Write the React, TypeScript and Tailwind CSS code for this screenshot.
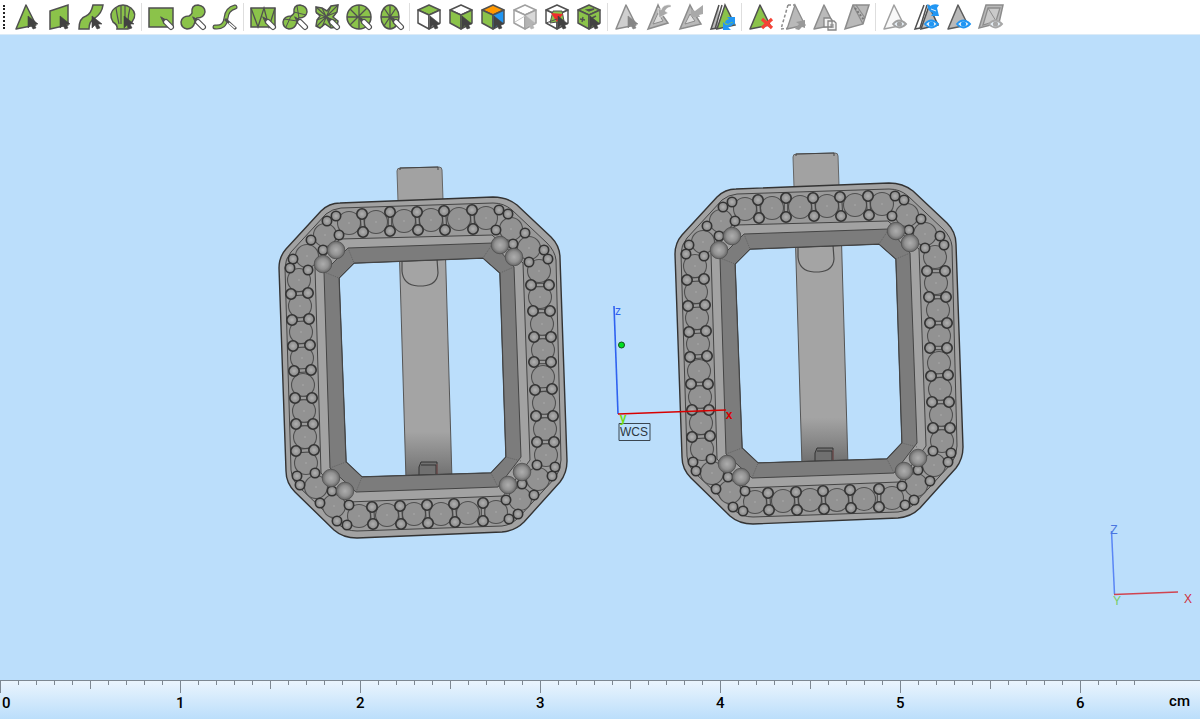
import React from 'react';

const GREEN = '#8bc34a';
const DARK = '#505050';
const GRAY = '#b9b9b9';
const GRAY_LINE = '#8c8c8c';
const BLUE = '#2196f3';

function Cursor({ color = '#424242' }: { color?: string }) {
  return <path d="M14 12v12l3-3 2 4 3-1-2-4h4z" fill={color} stroke={color} strokeWidth={0.6} strokeLinejoin="round" />;
}

function Stylus() {
  return (
    <g strokeLinecap="round">
      <path d="M13 13l5 3-2 3z" fill={DARK} stroke={DARK} />
      <path d="M18 18l5 5" stroke={DARK} strokeWidth={6} />
      <path d="M18 18l5 5" stroke="#fff" strokeWidth={3.8} />
    </g>
  );
}

function Eye({ color = BLUE }: { color?: string }) {
  return (
    <g>
      <path d="M11 20q6-7 13 0q-7 7-13 0z" fill="#e8f1f8" stroke={color} strokeWidth={1.8} />
      <circle cx={17.5} cy={20} r={2.6} fill={color} />
    </g>
  );
}

function Refresh() {
  return (
    <g fill={BLUE}>
      <path d="M17 13h8v8l-3-3-4 2-3-1q0-3 4-4z" />
      <path d="M13 18v8h8l-3-3q5-1 6-4h-3q-2 2-5 2z" />
    </g>
  );
}

function Cube({ top = '#fff', left = '#fff', right = '#fff', line = DARK }: { top?: string; left?: string; right?: string; line?: string }) {
  return (
    <g stroke={line} strokeWidth={1.5} strokeLinejoin="round">
      <path d="M13 1l11 5-11 5L2 6z" fill={top} />
      <path d="M2 6l11 5v14L2 19z" fill={left} />
      <path d="M24 6l-11 5v14l11-6z" fill={right} />
    </g>
  );
}

function Triangle({ fill = GREEN, line = DARK }: { fill?: string; line?: string }) {
  return <path d="M12 1L2 25l20-4z" fill={fill} stroke={line} strokeWidth={1.5} strokeLinejoin="round" />;
}

const blob = 'M12 9Q11 1 18 1Q25 2 25 8Q24 14 17 14Q15 15 15 18Q13 25 7 25Q1 24 1 18Q2 12 9 12Q11 11 12 9z';

const toolGroups: { label: string; icon: React.ReactNode }[][] = [
  [
    { label: 'Select face', icon: <><Triangle /><Cursor /></> },
    { label: 'Select plane', icon: <><path d="M4 7l18-6v20L4 25z" fill={GREEN} stroke={DARK} strokeWidth={1.5} /><Cursor /></> },
    { label: 'Select smooth region', icon: <><path d="M1 25Q1 14 8 12Q13 10 15 1H25Q24 9 17 14Q11 17 11 25z" fill={GREEN} stroke={DARK} strokeWidth={1.5} /><Cursor /></> },
    { label: 'Select shell', icon: <><path d="M7 25Q8 21 3 18Q-2 9 5 4Q13-2 21 4Q28 10 22 18Q18 21 18 25z" fill={GREEN} stroke={DARK} strokeWidth={1.5} /><path d="M6 4Q7 11 9 20M11 2v18M15 2v18M20 4Q18 11 18 18" stroke={DARK} strokeWidth={1.2} /><Cursor /></> },
  ],
  [
    { label: 'Rectangle selection', icon: <><path d="M1 4h24v19H1z" fill={GREEN} stroke={DARK} strokeWidth={1.5} /><Stylus /></> },
    { label: 'Freeform selection', icon: <><path d={blob} fill={GREEN} stroke={DARK} strokeWidth={1.5} /><Stylus /></> },
    { label: 'Brush selection', icon: <><g strokeLinecap="round"><path d="M3 23Q13 24 14 14Q15 5 23 3" stroke={DARK} strokeWidth={5} /><path d="M3 23Q13 24 14 14Q15 5 23 3" stroke={GREEN} strokeWidth={2.6} /></g><path d="M13 15l11 10" stroke={DARK} strokeWidth={3} /><path d="M17 19l6 5" stroke="#fff" strokeWidth={1.5} /></> },
  ],
  [
    { label: 'Rectangle through', icon: <><path d="M1 4h24v19H1z" fill={GREEN} stroke={DARK} strokeWidth={1.5} /><path d="M1 4l7 19 6-19 5 19 6-19" stroke={DARK} strokeWidth={1.3} /><Stylus /></> },
    { label: 'Freeform through', icon: <><path d={blob} fill={GREEN} stroke={DARK} strokeWidth={1.5} /><path d="M12 8l12 3M15 2l2 12M2 15l13 2M4 23l5-11" stroke={DARK} /><Stylus /></> },
    { label: 'Star selection', icon: <><path d="M2 3l6 1 5 3 4-5 7-1-1 7-4 5 5 4-1 6-6 1-6-4-5 4-4-2 1-6 3-4-4-4z" fill={GREEN} stroke={DARK} strokeWidth={1.5} /><path d="M2 3l21 19M24 1L3 22M8 4l9 19M17 2L8 23M2 9l20 8M23 8L3 16" stroke={DARK} strokeWidth={1.1} /><Stylus /></> },
    { label: 'Circle selection', icon: <><circle cx={13} cy={13} r={12} fill={GREEN} stroke={DARK} strokeWidth={1.5} /><path d="M13 1v24M1 13h24M4 5l17 17M21 4L4 21" stroke={DARK} strokeWidth={1.3} /><Stylus /></> },
    { label: 'Ellipse selection', icon: <><ellipse cx={12} cy={13} rx={9} ry={12} fill={GREEN} stroke={DARK} strokeWidth={1.5} /><path d="M12 1v24M3 13h18M6 4l12 18M18 4L6 22" stroke={DARK} strokeWidth={1.3} /><Stylus /></> },
  ],
  [
    { label: 'Top faces', icon: <><Cube top={GREEN} /><Cursor /></> },
    { label: 'Side faces', icon: <><Cube left={GREEN} right={GREEN} /><Cursor /></> },
    { label: 'Faces by colour', icon: <><Cube top="#ff9800" left={GREEN} right={BLUE} /><Cursor /></> },
    { label: 'Hidden faces', icon: <><Cube right="#d8d8d8" line="#a0a0a0" /><path d="M3 18l10-6" stroke="#c8c8c8" /><Cursor color="#b4b4b4" /></> },
    { label: 'Inner faces', icon: <><Cube /><path d="M6 19l3-12h9l2 10z" fill={GREEN} stroke={DARK} /><path d="M7 9l12 1-6 8z" fill="#f02c2c" /><path d="M2 19l11-4M13 18v7" stroke={DARK} /><Cursor /></> },
    { label: 'Textured faces', icon: <><Cube top={GREEN} left={GREEN} right={GREEN} /><path d="M11 6l7-1-5 2zM4 15l5 1M7 13l-1 5M16 14l4-2" fill={DARK} stroke={DARK} strokeWidth={1.4} /><Cursor /></> },
  ],
  [
    { label: 'Pick', icon: <><Triangle fill="#cfcfcf" line={GRAY_LINE} /><Cursor color="#858585" /></> },
    { label: 'Shrink selection', icon: <><path d="M12 1L2 25l20-6-5-7z" fill={GRAY} stroke={GRAY_LINE} strokeWidth={1.5} /><path d="M12 9L7 20l10-3z" fill="#dcdcdc" stroke={GRAY_LINE} /><path d="M25 1Q17 0 15 6l-3-2 1 10 9-5-3-2Q21 3 25 3z" fill="#a9a9a9" stroke="#fff" strokeWidth={0.5} /></> },
    { label: 'Grow selection', icon: <><path d="M12 1L2 25l21-5-5-8z" fill={GRAY} stroke={GRAY_LINE} strokeWidth={1.5} /><path d="M12 10L7 20l10-3z" fill="#e2e2e2" stroke={GRAY_LINE} /><path d="M13 13V5l4 2 8-6v9l-4 1 1 2z" fill="#a9a9a9" /></> },
    { label: 'Invert selection', icon: <><path d="M9 1L1 25l7-1M12 1L5 25" stroke={DARK} strokeWidth={1.5} fill={GRAY} /><path d="M15 1L7 25l18-4z" fill={GREEN} stroke={DARK} strokeWidth={1.5} /><Refresh /></> },
  ],
  [
    { label: 'Delete faces', icon: <><Triangle /><path d="M14 15l10 9M24 15l-10 9" stroke="#f44336" strokeWidth={3.2} /></> },
    { label: 'Detach faces', icon: <><path d="M8 1L1 25l8-1M8 1h7" stroke={GRAY_LINE} strokeWidth={1.5} strokeDasharray="3 2" /><path d="M15 1L7 25l18-4z" fill={GRAY} stroke={GRAY_LINE} strokeWidth={1.3} /><path d="M15 25l4-5-3-2 9-2v8l-3-1-3 3z" fill="#999" /></> },
    { label: 'Copy faces', icon: <><Triangle fill={GRAY} line={GRAY_LINE} /><path d="M12 14h6l2 2v7h-8zM16 17h6l2 2v7h-8z" fill="#f2f2f2" stroke="#858585" strokeWidth={1.3} /><path d="M18 21h4M18 23h4" stroke="#858585" /></> },
    { label: 'Split faces', icon: <><path d="M9 1h16l-6 19-18 5z" fill={GRAY} stroke={GRAY_LINE} strokeWidth={1.5} /><path d="M9 1l10 19M12 1l9 13" stroke={GRAY_LINE} strokeWidth={1.3} /><path d="M11 4l9 12" stroke="#777" strokeWidth={2} strokeDasharray="2 2" /></> },
  ],
  [
    { label: 'Hide faces', icon: <><Triangle fill="#f8f8f8" line="#a0a0a0" /><Eye color="#a0a0a0" /></> },
    { label: 'Swap visibility', icon: <><path d="M10 1L1 25l5-1L13 1" stroke={DARK} strokeWidth={1.5} fill="#fff" /><path d="M15 2L7 25l17-4z" fill={GRAY} stroke={DARK} strokeWidth={1.5} /><path d="M13 0l3 2q4-3 9-1l-2 3 2 8h-8l2-3q-5-1-6-9z" fill={BLUE} /><path d="M17 5l5 2" stroke="#d9eefb" /><Eye /></> },
    { label: 'Show faces', icon: <><Triangle fill={GRAY} line="#5c5c5c" /><Eye /></> },
    { label: 'Show all', icon: <><path d="M8 1h17l-4 18-20 5z" fill={GRAY} stroke={GRAY_LINE} strokeWidth={1.5} /><path d="M10 4h12l-4 13-13 4z" fill="#c9c9c9" stroke={GRAY_LINE} strokeWidth={1.3} /><path d="M10 4l8 13" stroke={GRAY_LINE} /><Eye color="#a8a8a8" /></> },
  ],
];

// large pavé stones
const stones = [
  [349, 223], [376, 222], [404, 221], [431, 220], [459, 219], [486, 218],
  [539, 271], [540, 297], [542, 324], [543, 350], [543, 377], [544, 403], [545, 429], [546, 455],
  [299, 280], [300, 306], [301, 332], [302, 358], [303, 385], [304, 411], [305, 437], [306, 463],
  [359, 516], [387, 515], [414, 514], [441, 514], [468, 513], [496, 512],
  [325, 235], [307, 256], [511, 229], [529, 248], [316, 487], [334, 506], [538, 479], [520, 499],
];

// prongs that sit in pairs: x1, y1, x2, y2
const prongPairs = [
  [362, 214, 363, 232], [390, 212, 390, 231], [417, 212, 418, 230], [444, 211, 445, 230], [472, 210, 473, 229],
  [531, 285, 549, 285], [533, 311, 550, 311], [534, 337, 551, 337], [534, 362, 551, 362], [535, 390, 552, 389], [536, 416, 553, 416], [537, 442, 554, 442],
  [291, 294, 308, 293], [292, 320, 309, 319], [293, 346, 310, 345], [294, 371, 311, 370], [295, 398, 312, 398], [296, 424, 313, 424], [296, 451, 314, 450],
  [372, 507, 373, 524], [400, 506, 401, 524], [427, 505, 428, 523], [454, 504, 455, 522], [483, 503, 483, 521],
];

const cornerProngs = [
  [336, 216], [327, 221], [311, 240], [293, 259], [290, 268], [308, 270], [339, 235], [323, 250],
  [499, 210], [508, 214], [525, 233], [544, 250], [548, 259], [529, 262], [496, 230], [513, 244],
  [297, 476], [300, 485], [320, 503], [337, 521], [347, 525], [349, 505], [315, 473], [332, 491],
  [555, 467], [552, 476], [534, 495], [518, 514], [509, 519], [506, 500], [537, 465], [522, 484],
];

const balls = [
  [336, 250], [323, 264], [500, 245], [514, 257], [331, 478], [345, 491], [522, 472], [508, 485],
];

function Buckle() {
  return (
    <g strokeLinejoin="round">
      {/* strap behind the frame */}
      <path d="M399 240l46-2 7 242h-46z" fill="url(#strap)" stroke="#555" />
      <path d="M402 261v10q1 14 16 15h5q14-1 15-13l-1-14" stroke="#4a4a4a" strokeWidth={1.2} />
      <path d="M398 201l-1-30q0-3 3-3l39-1q3 0 3 3l1 30z" fill="#a2a2a2" stroke="#666" />
      <path d="M400 170v-2l38-1v3" stroke="#444" />
      <path d="M419 476v-9l2-5h16v13z" fill="#707070" stroke="#333" />
      <path d="M421 465h15v9" stroke="#333" />
      <path d="M437 464v10" stroke="#a45b5b" strokeWidth={0.6} />

      {/* frame */}
      <path
        fillRule="evenodd"
        d="M340 203L493 197Q507 197 517 205L551 237Q560 246 560 258L567 461Q567 473 560 482L524 522Q515 531 502 532L357 538Q343 538 334 530L295 492Q286 483 286 471L279 268Q279 257 286 249L321 211Q329 203 340 203zM354 263L339 278 346 462 362 477 491 473 506 457 500 273 483 258z"
        fill="#a2a2a2"
        stroke="#333"
        strokeWidth={1.4}
      />
      <path
        fillRule="evenodd"
        d="M341 208L493 203Q504 203 512 210L547 243Q555 251 556 260L561 460Q561 470 555 478L520 516Q512 525 502 526L357 531Q346 531 338 524L299 487Q292 480 291 470L285 268Q285 259 291 252L326 214Q332 209 341 208zM340 239L315 267 321 473 348 502 503 496 530 460 523 263 492 235z"
        fill="#9a9a9a"
        stroke="#444"
      />
      <path
        fillRule="evenodd"
        d="M348 248L324 272 330 468 356 492 498 487 521 457 514 267 493 243zM354 263L339 278 346 462 362 477 491 473 506 457 500 273 483 258z"
        fill="#7c7c7c"
        stroke="#444"
      />
      <path d="M348 248l6 15M324 272l15 6M493 243l-10 15M514 267l-14 6M330 468l16-6M356 492l6-15M498 487l-7-14M521 461l-15-4" stroke="#5c5c5c" strokeWidth={0.8} strokeDasharray="1 1" />

      {stones.map(([x, y]) => (
        <g key={`${x}-${y}`}>
          <circle cx={x} cy={y} r={11.5} fill="#929292" stroke="#505050" strokeWidth={1.1} />
          <circle cx={x} cy={y} r={0.8} fill="#aaa" />
        </g>
      ))}
      {prongPairs.map(([x1, y1, x2, y2]) => (
        <g key={`${x1}-${y1}`}>
          <path d={`M${x1} ${y1}L${x2} ${y2}`} stroke="#444" strokeWidth={4.5} />
          <path d={`M${x1} ${y1}L${x2} ${y2}`} stroke="#999" strokeWidth={2.4} />
          <circle cx={x1} cy={y1} r={5.2} fill="url(#prong)" stroke="#333" strokeWidth={1.6} />
          <circle cx={x2} cy={y2} r={5.2} fill="url(#prong)" stroke="#333" strokeWidth={1.6} />
        </g>
      ))}
      {cornerProngs.map(([x, y]) => (
        <circle key={`${x}-${y}`} cx={x} cy={y} r={4.7} fill="url(#prong)" stroke="#333" strokeWidth={1.6} />
      ))}
      {balls.map(([x, y]) => (
        <circle key={`${x}-${y}`} cx={x} cy={y} r={8.8} fill="url(#ball)" stroke="#4f4f4f" strokeWidth={0.8} />
      ))}
    </g>
  );
}

function Viewport() {
  return (
    <svg viewBox="0 35 1200 645" className="min-h-0 w-full flex-1" fill="none">
      <defs>
        <linearGradient id="strap" x1="0" y1="0" x2="0" y2="1">
          <stop offset="0" stopColor="#a4a4a4" />
          <stop offset="0.8" stopColor="#a4a4a4" />
          <stop offset="1" stopColor="#6c6c6c" />
        </linearGradient>
        <radialGradient id="prong">
          <stop offset="0" stopColor="#b0b0b0" />
          <stop offset="1" stopColor="#868686" />
        </radialGradient>
        <radialGradient id="ball">
          <stop offset="0" stopColor="#adadad" />
          <stop offset="0.6" stopColor="#929292" />
          <stop offset="1" stopColor="#666" />
        </radialGradient>
      </defs>

      <Buckle />
      <g transform="translate(396 -14)">
        <Buckle />
      </g>

      {/* work coordinate system */}
      <path d="M614 306l4 108" stroke="#2f62f0" strokeWidth={1.6} />
      <path d="M618 414l108-4" stroke="#d80000" strokeWidth={1.6} />
      <circle cx={621.5} cy={345} r={3} fill="#00e020" stroke="#14501a" />
      <path d="M619 423.500h31v17h-31z" stroke="#3a4650" />
      <g className="font-['Liberation_Sans',sans-serif] text-[12px]" textAnchor="middle">
        <text x={618} y={315} fill="#2f62f0">z</text>
        <text x={729} y={419} fill="#d80000" className="font-bold">x</text>
        <text x={623} y={422} fill="#6fdc10" className="font-bold">y</text>
        <text x={634} y={436} fill="#2c3640">WCS</text>
      </g>

      {/* view orientation */}
      <path d="M1111.500 531l3 63" stroke="#5a86f5" strokeWidth={1.5} />
      <path d="M1114 594.500l64-2.500" stroke="#d04450" strokeWidth={1.5} />
      <g className="font-['Liberation_Sans',sans-serif] text-[12px]" textAnchor="middle">
        <text x={1114} y={534} fill="#4a76e0">Z</text>
        <text x={1188} y={603} fill="#d03040">X</text>
        <text x={1117} y={605} fill="#77cc66">Y</text>
      </g>
    </svg>
  );
}

function Ruler() {
  const marks = [0, 1, 2, 3, 4, 5, 6];

  return (
    <footer className="flex h-[39px] shrink-0 justify-between overflow-hidden border-t border-[#7d8791] bg-linear-to-b from-[#eaf4fd] to-[#bbdefb] font-[Roboto,sans-serif] text-[15px] font-medium leading-5 text-black">
      <ol className="flex">
        {marks.map((cm) => (
          <li key={cm} className={cm === 6 ? 'w-[72px] shrink-0' : 'w-[180px] shrink-0'}>
            <div className="flex h-3 items-start">
              {Array.from({ length: cm === 6 ? 4 : 10 }, (_, i) => (
                <span key={i} className="w-[18px] shrink-0">
                  <span className={`block w-px bg-[#7d8791] ${i === 0 ? 'h-3' : i === 5 ? 'h-2' : 'h-1'}`} />
                </span>
              ))}
            </div>
            <span className={cm === 0 ? 'ml-0.5 block' : '-ml-1 block'}>{cm}</span>
          </li>
        ))}
      </ol>
      <span className="mr-2.5 mt-2.5">cm</span>
    </footer>
  );
}

export default function App() {
  return (
    <div className="flex h-screen flex-col bg-[#bbdefb]">
      <header className="flex h-[35px] shrink-0 items-center overflow-hidden border-b border-[#dcebf7] bg-white">
        <span className="ml-[3px] mr-1.5 h-6 w-0.5 border-l-2 border-dotted border-[#222]" />
        {toolGroups.map((group, index) => (
          <React.Fragment key={index}>
            {index > 0 && <span className="ml-0.5 mr-[3px] h-7 w-px shrink-0 bg-[#dedede]" />}
            {group.map((tool) => (
              <button key={tool.label} type="button" aria-label={tool.label} className="flex h-full w-8 shrink-0 items-center justify-center">
                <svg viewBox="0 0 26 26" className="size-[26px] overflow-visible" fill="none">
                  {tool.icon}
                </svg>
              </button>
            ))}
          </React.Fragment>
        ))}
      </header>
      <main className="flex min-h-0 flex-1 flex-col">
        <Viewport />
      </main>
      <Ruler />
    </div>
  );
}
